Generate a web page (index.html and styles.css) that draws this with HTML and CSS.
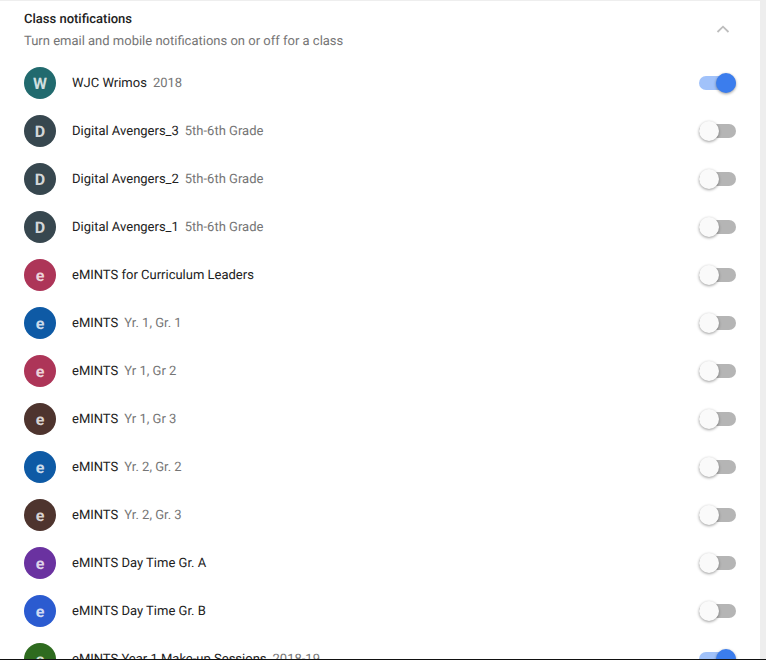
FILE: index.html
```html
<!DOCTYPE html>
<html lang="en">
<head>
<meta charset="utf-8">
<title>Class notifications</title>
<link rel="stylesheet" href="styles.css">
</head>
<body>
<main class="viewport">
  <section class="card">
    <header class="head">
      <div>
        <h2 class="title">Class notifications</h2>
        <p class="sub">Turn email and mobile notifications on or off for a class</p>
      </div>
      <svg class="chev" viewBox="0 0 14 8" aria-hidden="true"><path d="M1.5 7 7 1.7 12.500 7" fill="none" stroke="#bdbdbd" stroke-width="1.800"/></svg>
    </header>
    <ul class="list">
      <li class="row"><span class="av teal">W</span><span class="name">WJC Wrimos</span><span class="sec">2018</span><span class="sw on"></span></li>
      <li class="row"><span class="av slate">D</span><span class="name">Digital Avengers_3</span><span class="sec">5th-6th Grade</span><span class="sw"></span></li>
      <li class="row"><span class="av slate">D</span><span class="name">Digital Avengers_2</span><span class="sec">5th-6th Grade</span><span class="sw"></span></li>
      <li class="row"><span class="av slate">D</span><span class="name">Digital Avengers_1</span><span class="sec">5th-6th Grade</span><span class="sw"></span></li>
      <li class="row"><span class="av rose">e</span><span class="name">eMINTS for Curriculum Leaders</span><span class="sw"></span></li>
      <li class="row"><span class="av blue">e</span><span class="name">eMINTS</span><span class="sec">Yr. 1, Gr. 1</span><span class="sw"></span></li>
      <li class="row"><span class="av rose">e</span><span class="name">eMINTS</span><span class="sec">Yr 1, Gr 2</span><span class="sw"></span></li>
      <li class="row"><span class="av brown">e</span><span class="name">eMINTS</span><span class="sec">Yr 1, Gr 3</span><span class="sw"></span></li>
      <li class="row"><span class="av blue">e</span><span class="name">eMINTS</span><span class="sec">Yr. 2, Gr. 2</span><span class="sw"></span></li>
      <li class="row"><span class="av brown">e</span><span class="name">eMINTS</span><span class="sec">Yr. 2, Gr. 3</span><span class="sw"></span></li>
      <li class="row"><span class="av purple">e</span><span class="name">eMINTS Day Time Gr. A</span><span class="sw"></span></li>
      <li class="row"><span class="av indigo">e</span><span class="name">eMINTS Day Time Gr. B</span><span class="sw"></span></li>
      <li class="row"><span class="av green">e</span><span class="name">eMINTS Year 1 Make-up Sessions</span><span class="sec">2018-19</span><span class="sw on"></span></li>
    </ul>
  </section>
</main>
</body>
</html>
```
FILE: styles.css
```css
html, body {
  margin: 0;
  height: 100%;
  overflow: hidden;
  background: #eeeeee;
}
.viewport {
  height: 658px;
  overflow: hidden;
  border-bottom: 1px solid #111;
  padding-top: 1px;
}
.card {
  width: 760px;
  background: #fff;
  font-family: Roboto, "Liberation Sans", sans-serif;
  font-size: 13px;
  color: #212121;
  text-rendering: geometricPrecision;
}
.head {
  display: flex;
  justify-content: space-between;
  align-items: flex-start;
  padding: 9px 30px 0 24px;
  height: 49px;
}
.title {
  margin: 0;
  padding-top: 2px;
  font-size: 13px;
  line-height: 16px;
  font-weight: 500;
  color: #212121;
}
.sub {
  margin: 6px 0 0;
  font-size: 13px;
  line-height: 16px;
  color: #757575;
}
.chev {
  width: 14px;
  height: 8px;
  margin-top: 15px;
}
.list {
  list-style: none;
  margin: 0;
  padding: 0;
}
.row {
  display: flex;
  align-items: center;
  height: 48px;
  padding: 0 24px;
}
.av {
  width: 32px;
  height: 32px;
  border-radius: 50%;
  margin-right: 16px;
  display: flex;
  align-items: center;
  justify-content: center;
  flex: none;
  color: rgba(255, 255, 255, .8);
  font-size: 16px;
  font-weight: 700;
}
.teal { background: #216a6e; }
.slate { background: #37474f; }
.rose { background: #ad3558; }
.blue { background: #0e5aa5; }
.brown { background: #4e342e; }
.purple { background: #6a32a0; }
.indigo { background: #2b5bd0; }
.green { background: #2e6b1f; }
.name {
  color: #212121;
}
.sec {
  margin-left: 6px;
  color: #757575;
}
.sw {
  position: relative;
  margin-left: auto;
  width: 37px;
  height: 14px;
  border-radius: 7px;
  background: #b5b5b5;
}
.sw::after {
  content: "";
  position: absolute;
  top: -3px;
  left: -0.5px;
  width: 20px;
  height: 20px;
  border-radius: 50%;
  background: #fafafa;
  box-shadow: 0 1px 3px rgba(0, 0, 0, .4);
}
.sw.on { background: #a1c2fa; }
.sw.on::after {
  left: 17px;
  background: #3b7ded;
}
```
